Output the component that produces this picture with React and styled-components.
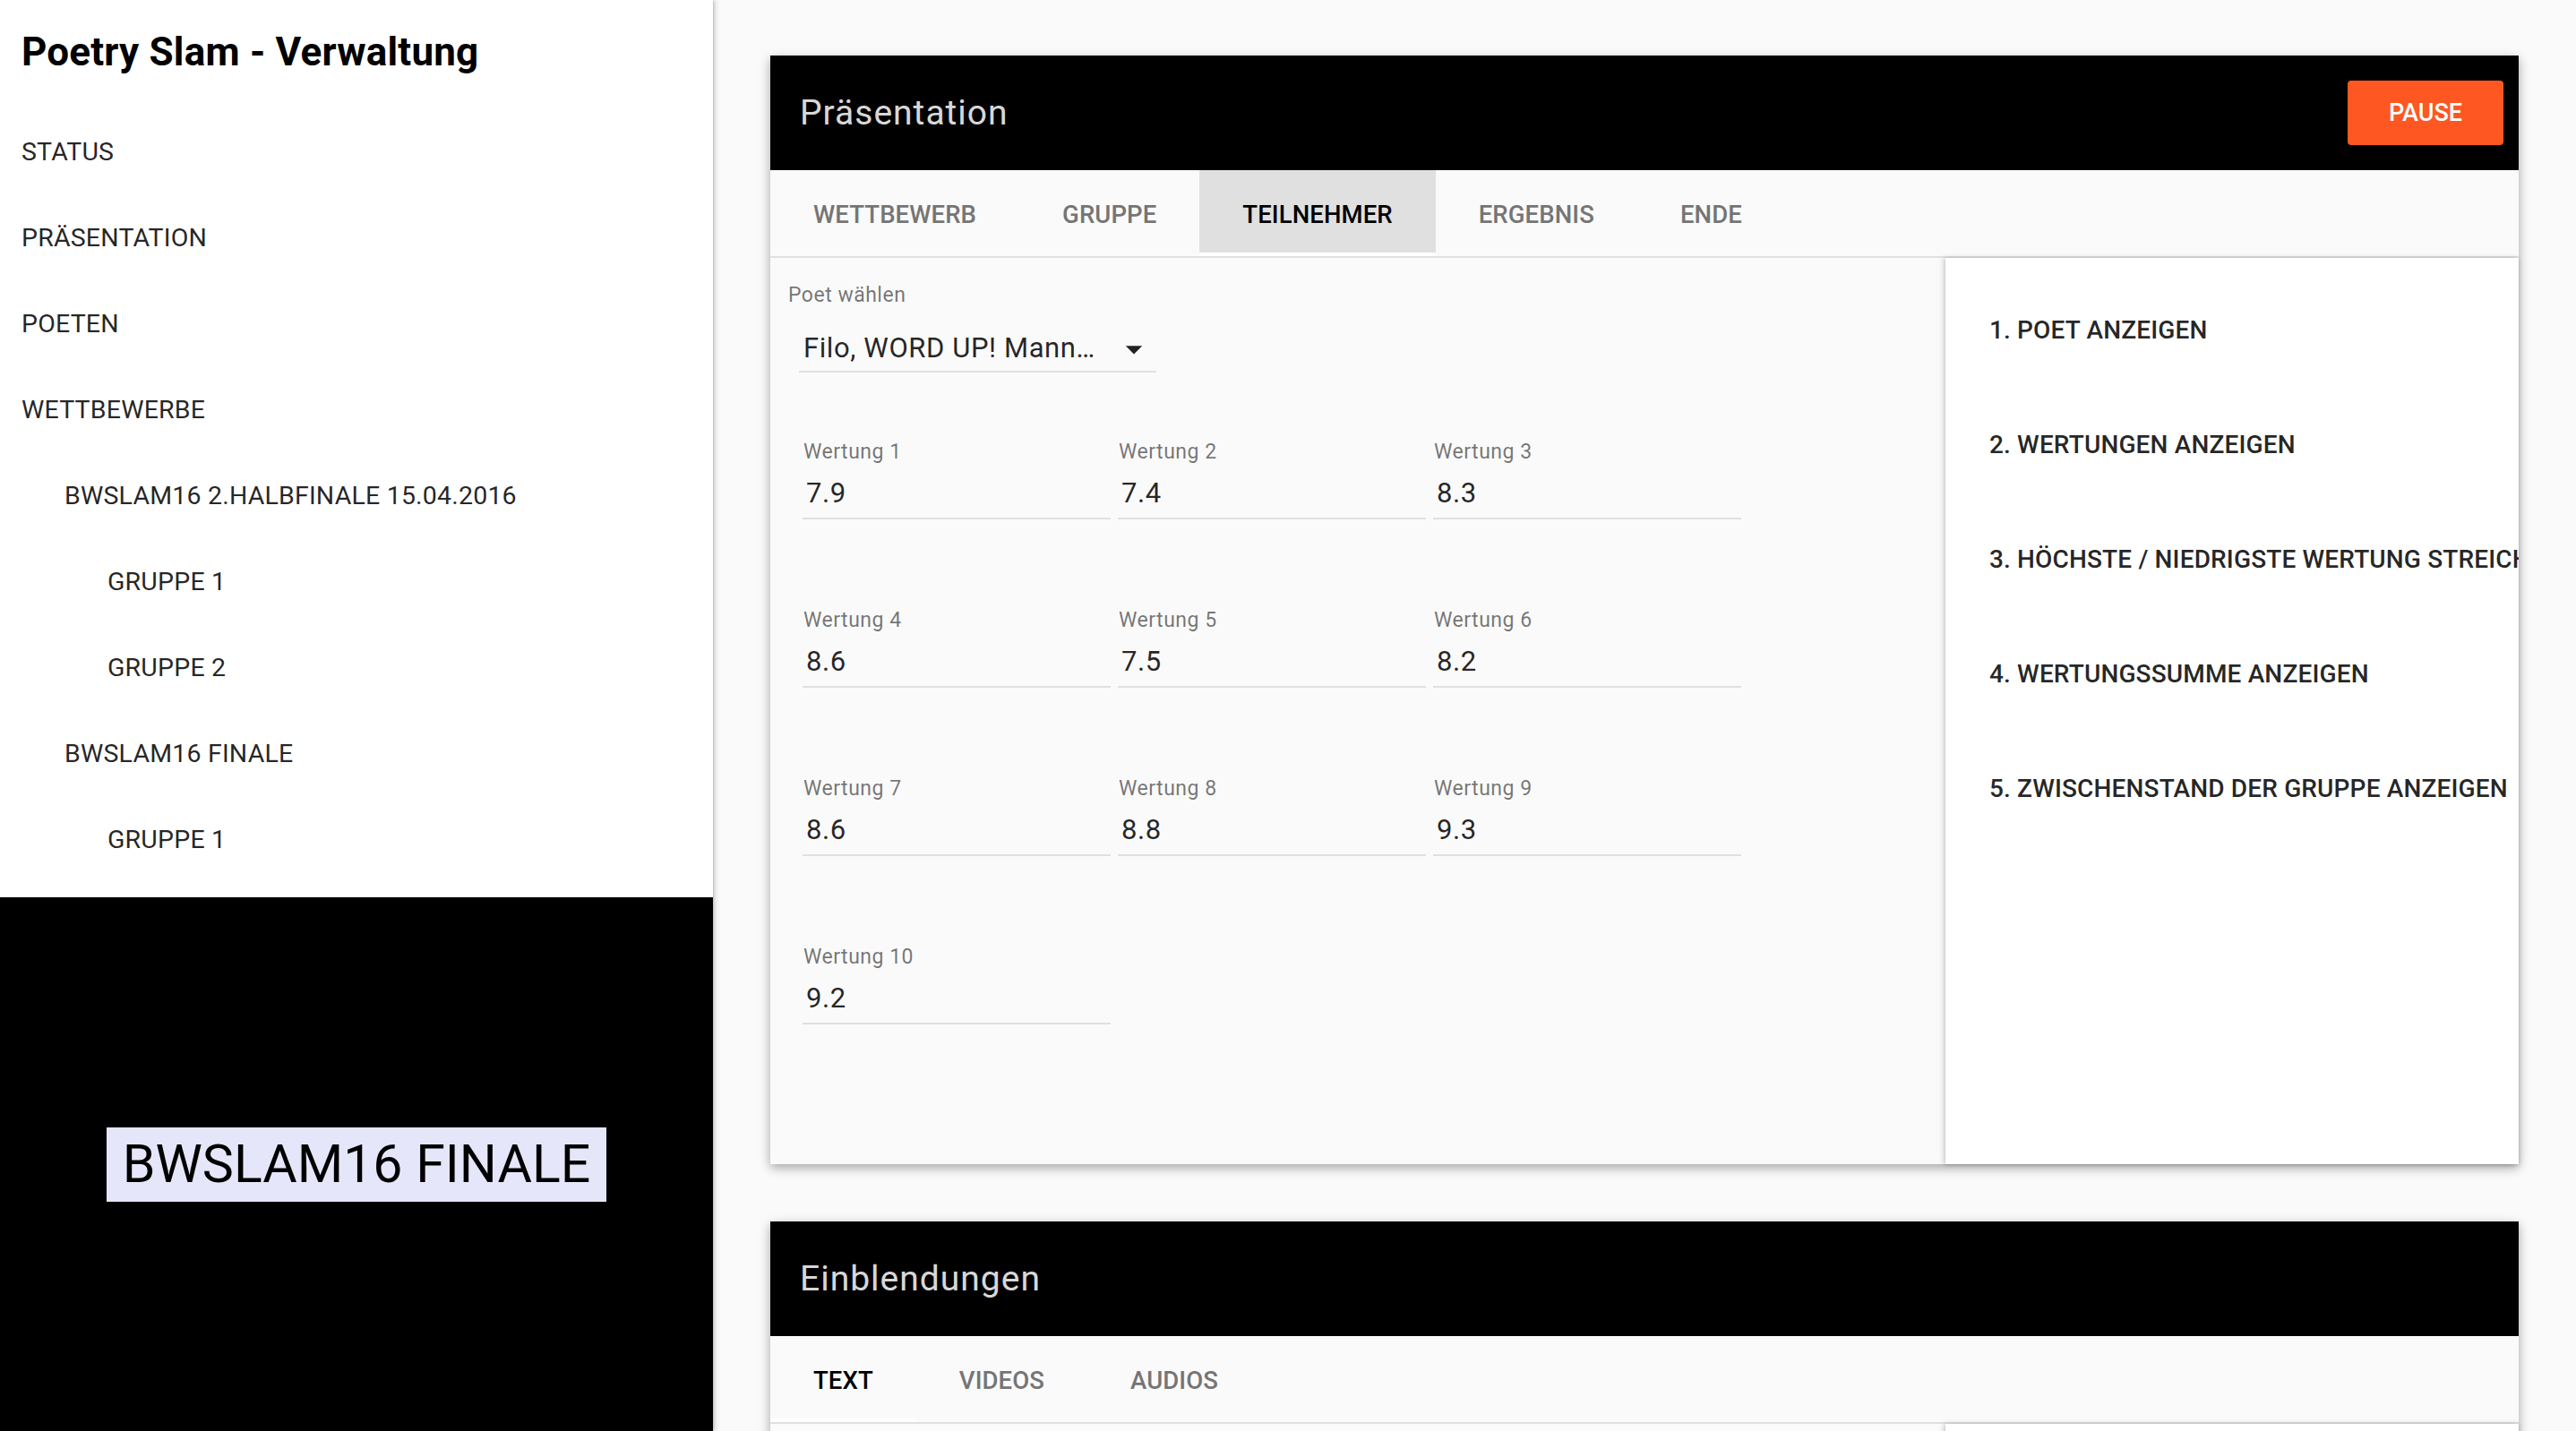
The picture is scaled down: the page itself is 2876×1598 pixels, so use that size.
import React from "react";
import styled, { createGlobalStyle } from "styled-components";

const GlobalStyle = createGlobalStyle`
  html, body {
    margin: 0;
    padding: 0;
    height: 100%;
    overflow: hidden;
    background: #fafafa;
    font-family: Roboto, "Noto Sans", "Liberation Sans", sans-serif;
  }

  #root {
    height: 100%;
  }

  * {
    box-sizing: border-box;
  }
`;

const navItems = [
  { label: "Status", depth: 0 },
  { label: "Präsentation", depth: 0 },
  { label: "Poeten", depth: 0 },
  { label: "Wettbewerbe", depth: 0 },
  { label: "BWSLAM16 2.Halbfinale 15.04.2016", depth: 1 },
  { label: "Gruppe 1", depth: 2 },
  { label: "Gruppe 2", depth: 2 },
  { label: "BWSLAM16 Finale", depth: 1 },
  { label: "Gruppe 1", depth: 2 },
];

const presentationTabs = [
  { label: "Wettbewerb" },
  { label: "Gruppe" },
  { label: "Teilnehmer", active: true, highlighted: true },
  { label: "Ergebnis" },
  { label: "Ende" },
];

const overlayTabs = [
  { label: "Text", active: true },
  { label: "Videos" },
  { label: "Audios" },
];

const scores = ["7.9", "7.4", "8.3", "8.6", "7.5", "8.2", "8.6", "8.8", "9.3", "9.2"];

const steps = [
  "1. Poet anzeigen",
  "2. Wertungen anzeigen",
  "3. Höchste / niedrigste Wertung streichen",
  "4. Wertungssumme anzeigen",
  "5. Zwischenstand der Gruppe anzeigen",
];

const App = () => {
  return (
    <Layout>
      <GlobalStyle />
      <Sidebar>
        <Nav>
          <AppTitle>Poetry Slam - Verwaltung</AppTitle>
          {navItems.map((item, i) => (
            <NavItem key={i} depth={item.depth}>
              {item.label}
            </NavItem>
          ))}
        </Nav>
        <Preview>
          <PreviewLabel>BWSLAM16 FINALE</PreviewLabel>
        </Preview>
      </Sidebar>

      <Main>
        <Card>
          <CardHeader>
            <CardTitle>Präsentation</CardTitle>
            <PauseButton>Pause</PauseButton>
          </CardHeader>
          <TabBar>
            {presentationTabs.map((t) => (
              <Tab key={t.label} active={t.active} highlighted={t.highlighted}>
                {t.label}
              </Tab>
            ))}
          </TabBar>
          <CardBody>
            <FormColumn>
              <FieldLabel>Poet wählen</FieldLabel>
              <Select>
                <SelectValue>Filo, WORD UP! Mann…</SelectValue>
                <svg width="44" height="44" viewBox="0 0 24 24">
                  <path d="M7 10l5 5 5-5z" fill="#212121" />
                </svg>
              </Select>
              <ScoreGrid>
                {scores.map((s, i) => (
                  <ScoreField key={i}>
                    <FieldLabel>Wertung {i + 1}</FieldLabel>
                    <ScoreValue>{s}</ScoreValue>
                  </ScoreField>
                ))}
              </ScoreGrid>
            </FormColumn>
            <ActionColumn>
              {steps.map((s) => (
                <ActionButton key={s}>{s}</ActionButton>
              ))}
            </ActionColumn>
          </CardBody>
        </Card>

        <Card>
          <CardHeader>
            <CardTitle>Einblendungen</CardTitle>
          </CardHeader>
          <TabBar>
            {overlayTabs.map((t) => (
              <Tab key={t.label} active={t.active}>
                {t.label}
              </Tab>
            ))}
          </TabBar>
          <CardBody>
            <FormColumn />
            <ActionColumn />
          </CardBody>
        </Card>
      </Main>
    </Layout>
  );
};

export default App;

const Layout = styled.div`
  display: flex;
  height: 100vh;
  overflow: hidden;
`;

const Sidebar = styled.aside`
  width: 796px;
  flex-shrink: 0;
  display: flex;
  flex-direction: column;
  background: #fff;
  position: relative;
  z-index: 2;
  box-shadow: 2px 0 6px rgba(0, 0, 0, 0.18), 1px 0 2px rgba(0, 0, 0, 0.12);
`;

const Nav = styled.nav`
  display: flex;
  flex-direction: column;
  padding: 32px 0 16px;
`;

const AppTitle = styled.h1`
  margin: 0 0 38px 24px;
  font-size: 44px;
  line-height: 52px;
  font-weight: 700;
  letter-spacing: 0.2px;
  color: #000;
`;

const NavItem = styled.a`
  display: block;
  height: 96px;
  line-height: 96px;
  padding-left: ${(p) => 24 + p.depth * 48}px;
  font-size: 28.5px;
  font-weight: 400;
  letter-spacing: 0.2px;
  text-transform: uppercase;
  color: rgba(0, 0, 0, 0.87);
  cursor: pointer;
  white-space: nowrap;
`;

const Preview = styled.div`
  flex: 1;
  background: #000;
  display: flex;
  align-items: center;
  justify-content: center;
`;

const PreviewLabel = styled.div`
  background: #e6e6fa;
  color: #000;
  font-size: 59px;
  line-height: 70px;
  padding: 6px 18px 7px;
  font-weight: 400;
  white-space: nowrap;
`;

const Main = styled.main`
  flex: 1;
  overflow: hidden;
  padding: 62px 64px 0;
  background: #fafafa;
`;

const Card = styled.section`
  background: #fafafa;
  margin-bottom: 64px;
  box-shadow: 0 4px 14px rgba(0, 0, 0, 0.16), 0 4px 10px rgba(0, 0, 0, 0.2);
`;

const CardHeader = styled.header`
  height: 128px;
  background: #000;
  display: flex;
  align-items: center;
  justify-content: space-between;
  padding: 0 17px 0 33px;
`;

const CardTitle = styled.h2`
  margin: 0;
  font-size: 39px;
  letter-spacing: 1px;
  font-weight: 400;
  color: rgba(255, 255, 255, 0.87);
`;

const PauseButton = styled.button`
  width: 174px;
  height: 72px;
  border: 0;
  border-radius: 4px;
  background: #ff5722;
  color: #fff;
  font-family: inherit;
  font-size: 27px;
  font-weight: 500;
  text-transform: uppercase;
  cursor: pointer;
`;

const TabBar = styled.div`
  display: flex;
  background: #fafafa;
  border-bottom: 2px solid #e0e0e0;
`;

const Tab = styled.button`
  height: 96px;
  padding: 6px 48px 0;
  border: 0;
  border-bottom: 4px solid ${(p) => (p.active ? "#fff" : "transparent")};
  background: ${(p) => (p.highlighted ? "#e0e0e0" : "transparent")};
  background-clip: padding-box;
  font-family: inherit;
  font-size: 27.5px;
  font-weight: 500;
  letter-spacing: 0.1px;
  text-transform: uppercase;
  color: ${(p) => (p.active ? "#000" : "#757575")};
  cursor: pointer;
`;

const CardBody = styled.div`
  display: flex;
  min-height: 1012px;
`;

const FormColumn = styled.div`
  flex: 1;
  padding: 29px 0 156px 20px;
`;

const FieldLabel = styled.div`
  font-size: 23px;
  line-height: 26px;
  letter-spacing: 0.5px;
  color: rgba(0, 0, 0, 0.54);
  white-space: nowrap;
`;

const Select = styled.div`
  width: 399px;
  margin: 28px 0 0 12px;
  display: flex;
  align-items: center;
  justify-content: space-between;
  height: 45px;
  padding: 0 0 7px 5px;
  border-bottom: 2px solid #e0e0e0;

  svg {
    margin-right: 3px;
    margin-top: 2px;
  }
`;

const SelectValue = styled.span`
  font-size: 31px;
  line-height: 36px;
  letter-spacing: 0.6px;
  color: rgba(0, 0, 0, 0.87);
  white-space: nowrap;
`;

const ScoreGrid = styled.div`
  display: grid;
  grid-template-columns: repeat(3, 344px);
  column-gap: 8px;
  row-gap: 100px;
  margin: 76px 0 0 16px;
`;

const ScoreField = styled.div`
  border-bottom: 2px solid #e0e0e0;
  padding-bottom: 9px;

  ${FieldLabel} {
    padding-left: 1px;
    margin-bottom: 15px;
  }
`;

const ScoreValue = styled.div`
  font-size: 31px;
  line-height: 36px;
  letter-spacing: 0.6px;
  padding-left: 4px;
  color: rgba(0, 0, 0, 0.87);
`;

const ActionColumn = styled.div`
  width: 640px;
  flex-shrink: 0;
  background: #fff;
  overflow: hidden;
  display: flex;
  flex-direction: column;
  align-items: flex-start;
  gap: 62px;
  padding: 47px 0 0 20px;
  box-shadow: -2px 0 6px rgba(0, 0, 0, 0.16), 0 1px 4px rgba(0, 0, 0, 0.12);
`;

const ActionButton = styled.button`
  height: 66px;
  padding: 0 29px;
  border: 0;
  background: transparent;
  font-family: inherit;
  font-size: 28px;
  font-weight: 500;
  letter-spacing: 0.15px;
  text-transform: uppercase;
  white-space: nowrap;
  color: rgba(0, 0, 0, 0.87);
  cursor: pointer;
`;
